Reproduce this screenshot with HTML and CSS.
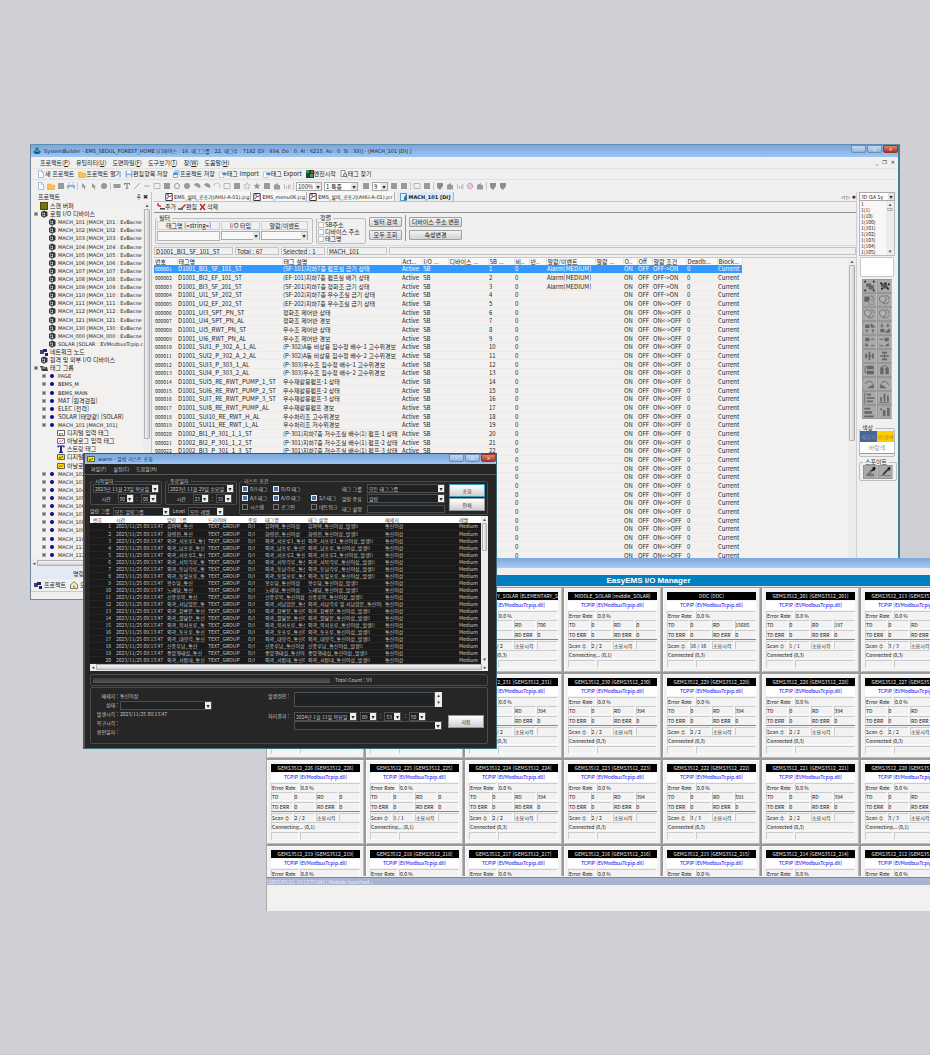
FILE: index.html
```html
<!DOCTYPE html>
<html lang="ko">
<head>
<meta charset="utf-8">
<title>SystemBuilder</title>
<link rel="stylesheet" href="styles.css">
</head>
<body>
<svg class="sprite" aria-hidden="true">
  <symbol id="logo" viewBox="0 0 8 8"><path d="M4 0l2 2-2 2-2-2zM2 3l2 2-2 2-2-2zM6 3l2 2-2 2-2-2z" fill="#0b7f86"/><path d="M2 5h4v2H2z" fill="#1a5c78"/></symbol>
  <symbol id="new" viewBox="0 0 8 8"><path d="M1.500.5h3l2 2v5h-5z" fill="#fff" stroke="#8fb0cc" stroke-width=".8"/><path d="M4.500.5v2h2" fill="none" stroke="#8fb0cc" stroke-width=".7"/></symbol>
  <symbol id="open" viewBox="0 0 8 8"><path d="M.5 2h3l1 1h3v4.500h-7z" fill="#f6c453" stroke="#d99a2b" stroke-width=".5"/><path d="M4 0h3v3H5z" fill="#fbe7b0"/></symbol>
  <symbol id="save" viewBox="0 0 8 8"><rect x=".5" y=".5" width="7" height="7" rx="1" fill="#7fb4e6"/><path d="M2 .5h4v3H2z" fill="#fff"/><path d="M2 5h4v3H2z" fill="#dcebf8"/></symbol>
  <symbol id="saveall" viewBox="0 0 8 8"><path d="M2.500 0h5v5h-5z" fill="#9cc6ee"/><path d="M1 2h5v6H1z" fill="#4d8fd0" stroke="#fff" stroke-width=".5"/><path d="M2 5h3v2H2z" fill="#fff"/></symbol>
  <symbol id="import" viewBox="0 0 8 8"><path d="M.5 2h4v5.500h-4z" fill="#fff" stroke="#8fb0cc" stroke-width=".6"/><path d="M3 3h2.500V1.500L8 4 5.500 6V4.500H3z" fill="#3c86c9"/></symbol>
  <symbol id="engine" viewBox="0 0 8 8"><path d="M0 0h8v8H0z" fill="#263c38"/><path d="M0 0h3v3H0zM4 4h3v3H4z" fill="#2f9c58"/><path d="M5 1h2v2H5z" fill="#d43d3d"/></symbol>
  <symbol id="find" viewBox="0 0 8 8"><path d="M1 .5h4v6H1z" fill="#fff" stroke="#667" stroke-width=".7"/><circle cx="5" cy="5" r="1.600" fill="#cfe4ee" stroke="#456" stroke-width=".7"/><path d="M6 6l1.500 1.500" stroke="#456"/></symbol>
  <symbol id="print" viewBox="0 0 8 8"><path d="M2 0h4v3H2z" fill="#fff" stroke="#89a" stroke-width=".5"/><path d="M0 3h8v3.500H0z" fill="#8fb3d2"/><path d="M2 5h4v3H2z" fill="#e8f0f6"/></symbol>
  <symbol id="cursor" viewBox="0 0 8 8"><path d="M2 1l4 3.500H4.500L5.500 7l-1 .5-1-2.500L2 6z" fill="#999"/></symbol>
  <symbol id="block" viewBox="0 0 8 8"><path d="M1 1h6v6H1z" fill="#999"/></symbol>
  <symbol id="bar" viewBox="0 0 8 8"><path d="M.5 2h7v4h-7z" fill="#999"/></symbol>
  <symbol id="text" viewBox="0 0 8 8"><path d="M1 1h6v2H6V2H4.600v4.500h.9V7h-3v-.5h.9V2H2v1H1z" fill="#888"/></symbol>
  <symbol id="line" viewBox="0 0 8 8"><path d="M1 7l6-6" stroke="#aaa"/></symbol>
  <symbol id="dash" viewBox="0 0 8 8"><path d="M1 4h6" stroke="#aaa"/></symbol>
  <symbol id="box" viewBox="0 0 8 8"><path d="M1 1.500h6v5H1z" fill="none" stroke="#aaa" stroke-width=".8"/></symbol>
  <symbol id="ring" viewBox="0 0 8 8"><circle cx="4" cy="4" r="2.600" fill="none" stroke="#999"/></symbol>
  <symbol id="disc" viewBox="0 0 8 8"><circle cx="4" cy="4" r="3" fill="#999"/></symbol>
  <symbol id="wedge" viewBox="0 0 8 8"><path d="M1 3a3 3 0 016 3L4 5z" fill="#999"/></symbol>
  <symbol id="arc" viewBox="0 0 8 8"><path d="M1 4a3 3 0 016 0v2" fill="none" stroke="#bbb" stroke-width=".8"/></symbol>
  <symbol id="star" viewBox="0 0 8 8"><path d="M4 .8l1 2 2.300.3-1.700 1.600.4 2.300-2-1-2 1 .4-2.300L.7 3.100 3 2.800z" fill="none" stroke="#aaa" stroke-width=".7"/></symbol>
  <symbol id="starf" viewBox="0 0 8 8"><path d="M4 .8l1 2 2.300.3-1.700 1.600.4 2.300-2-1-2 1 .4-2.300L.7 3.100 3 2.800z" fill="#999"/></symbol>
  <symbol id="house" viewBox="0 0 8 8"><path d="M1 3l4-2v2h2v4.500H1z" fill="#999"/></symbol>
  <symbol id="home" viewBox="0 0 8 8"><path d="M.5 4L4 .5 7.500 4v3.500h-7z" fill="#f3ecc8" stroke="#555" stroke-width=".8"/><path d="M3 4.500h2v3H3z" fill="#c9a227"/></symbol>
  <symbol id="chart" viewBox="0 0 8 8"><path d="M1.500 2v5M3.500 4v3M5.500 3v4M7 2v5" stroke="#bbb"/></symbol>
  <symbol id="down" viewBox="0 0 8 8"><path d="M1 1h6v3L4.500 7.500H3L1 5z" fill="#8c8c8c"/></symbol>
  <symbol id="cross" viewBox="0 0 8 8"><circle cx="4" cy="4" r="2.500" fill="none" stroke="#c5389b" stroke-dasharray="1.500 1"/><path d="M4 0v8M0 4h8" stroke="#e58acb" stroke-width=".5"/></symbol>
  <symbol id="dev" viewBox="0 0 8 8"><path d="M4 .5L7.500 2v4L4 7.700 1 6V2z" fill="#33383d"/><path d="M2 2.500l3 .5v3.500L2 5.500z" fill="#b7bdc2"/><circle cx="3.300" cy="4.300" r=".9" fill="#222"/></symbol>
  <symbol id="scan" viewBox="0 0 8 8"><path d="M0 0h8v8H0z" fill="#4c4a08"/><path d="M1 1h6v6H1z" fill="#77730c"/></symbol>
  <symbol id="net" viewBox="0 0 8 8"><path d="M0 2h4v4H0z" fill="#3b3f86"/><path d="M3 1h4v3H3zM5 5h3v3H5z" fill="#22265c"/></symbol>
  <symbol id="tags" viewBox="0 0 8 8"><path d="M0 2h3l1 1h3l1 4H2z" fill="#3c3c3c"/><path d="M1 3h5v2H1z" fill="#777"/></symbol>
  <symbol id="dot" viewBox="0 0 8 8"><circle cx="4" cy="4" r="2" fill="#0a0a8c"/></symbol>
  <symbol id="di" viewBox="0 0 8 8"><path d="M.5 1.500h7v5h-7z" fill="#fff" stroke="#444" stroke-width=".8"/><path d="M2 4h1.500v1.500H2z" fill="#d22"/><path d="M4.500 4H6v1.500H4.500z" fill="#292"/></symbol>
  <symbol id="ai" viewBox="0 0 8 8"><path d="M.5 1.500h7v5h-7z" fill="#fff" stroke="#555" stroke-width=".8"/><path d="M1.500 5.500l1.500-2 1.500 1 2-2" fill="none" stroke="#c2389a" stroke-width=".8"/></symbol>
  <symbol id="st" viewBox="0 0 8 8"><path d="M.5.5h7v2h-1l-.5-1H5v5l1 .5V8H2V7l1-.5v-5H2l-.5 1h-1z" fill="#20208c"/></symbol>
  <symbol id="do" viewBox="0 0 8 8"><path d="M.5 1.500h7v5h-7z" fill="#ffe100" stroke="#444" stroke-width=".8"/><path d="M2 4h2v1.500H2z" fill="#d22"/><path d="M4.500 3H6v1.500H4.500z" fill="#292"/></symbol>
  <symbol id="ao" viewBox="0 0 8 8"><path d="M.5 1.500h7v5h-7z" fill="#ffe100" stroke="#444" stroke-width=".8"/><path d="M1.500 5.500l1.500-2 1.500 1 2-2" fill="none" stroke="#a22" stroke-width=".8"/></symbol>
  <symbol id="jcg" viewBox="0 0 8 8"><path d="M.8.5h6.400v7H.8z" fill="#fff" stroke="#222" stroke-width=".9"/><path d="M2 6l2-3 1 1 1.500-2" stroke="#a2278f" fill="none"/><path d="M2 2h2" stroke="#333"/></symbol>
  <symbol id="page" viewBox="0 0 8 8"><path d="M.5.5h6v7h-6z" fill="#dff0fa" stroke="#3a84b5" stroke-width=".8"/><path d="M4 4l3-3v6H4z" fill="#2d79a8"/></symbol>
  <symbol id="add" viewBox="0 0 8 8"><path d="M0 1l4 3M1 0v3H4" stroke="#c22" fill="none"/><path d="M3 5h5v1.500H3z" fill="#445"/></symbol>
  <symbol id="edit" viewBox="0 0 8 8"><path d="M0 5h5v2H0z" fill="#678"/><path d="M3 5l4-4 1 1-4 4z" fill="#a33"/></symbol>
  <symbol id="del" viewBox="0 0 8 8"><path d="M1 1l5 6M6 1L1 7" stroke="#c01818" stroke-width="1.300"/></symbol>
  <symbol id="g0" viewBox="0 0 14 14"><path d="M3 4h6v4H3zM6 6h6v5H6z" fill="#666"/><path d="M1 1h2v2H1zM11 1h2v2h-2zM1 11h2v2H1zM11 11h2v2h-2z" fill="#222"/></symbol>
  <symbol id="g1" viewBox="0 0 14 14"><path d="M3 4h7v4H3zM5 7h6v3H5z" fill="#555"/><path d="M2 3h2v2H2zM7 3h2v2H7zM11 4h2v2h-2zM3 9h2v2H3zM10 9h2v2h-2z" fill="#111"/></symbol>
  <symbol id="g2" viewBox="0 0 14 14"><path d="M1 3h6v6H1z" fill="#606060"/><path d="M6 7h6v5H6z" fill="#aaa" stroke="#888"/><path d="M8 2q4 0 4 4" fill="none" stroke="#707070"/></symbol>
  <symbol id="g3" viewBox="0 0 14 14"><path d="M1 4l4-2 4 3-2 5-5-1z" fill="#b4b4b4" stroke="#707070"/><path d="M8 2q5 0 4 4M5 11q6 2 7-3" fill="none" stroke="#707070"/></symbol>
  <symbol id="g4" viewBox="0 0 14 14"><path d="M2 3h5v4H2z" fill="#666"/><path d="M9 2l4 4H9zM4 13V9M2.500 10.500L4 9l1.500 1.500M11 13V9M9.500 10.500L11 9l1.500 1.500" fill="#666" stroke="#666"/></symbol>
  <symbol id="g5" viewBox="0 0 14 14"><path d="M2 8h5v4H2z" fill="#666"/><path d="M13 8v4H8zM4 1v4M2.500 4L4 6l1.500-2M11 1v4M9.500 4L11 6l1.500-2" fill="#666" stroke="#666"/></symbol>
  <symbol id="g6" viewBox="0 0 14 14"><path d="M2 2h5v4H2zM2 8l5 4H2z" fill="#666"/><path d="M13 4H9l1.500-1.500M13 11H9l1.500 1.500" fill="none" stroke="#666"/></symbol>
  <symbol id="g7" viewBox="0 0 14 14"><path d="M7 2h5v4H7zM12 8v4H7z" fill="#666"/><path d="M1 4h4L3.500 2.500M1 11h4l-1.500 1.500" fill="none" stroke="#666"/></symbol>
  <symbol id="g8" viewBox="0 0 14 14"><path d="M2 4h2v6H2zM6 2h2v10H6zM10 4h2v6h-2zM2 6.500h10v1H2z" fill="#666"/></symbol>
  <symbol id="g9" viewBox="0 0 14 14"><path d="M4 2h6v2H4zM2 6h10v2H2zM4 10h6v2H4zM6.500 2h1v10h-1z" fill="#666"/></symbol>
  <symbol id="g10" viewBox="0 0 14 14"><path d="M4 2h8v4H4zM4 8h8v4H4z" fill="#666"/><path d="M4 3H2v7h3" fill="none" stroke="#666"/></symbol>
  <symbol id="g11" viewBox="0 0 14 14"><path d="M2 4h4v8H2zM8 4h4v8H8z" fill="#666"/><path d="M3 4q4-4 8 0" fill="none" stroke="#666"/></symbol>
  <symbol id="g12" viewBox="0 0 14 14"><path d="M4 12l8-5v5z" fill="#666"/><path d="M2 7q4-6 9-1" fill="none" stroke="#666"/></symbol>
  <symbol id="g13" viewBox="0 0 14 14"><path d="M2 12V7l8 5z" fill="#666"/><path d="M3 6q5-5 9 2" fill="none" stroke="#666"/></symbol>
  <symbol id="g14" viewBox="0 0 14 14"><path d="M1.500 1v12" stroke="#666"/><path d="M4 2h5v2H4zM4 6h9v2H4zM4 10h7v2H4z" fill="#666"/></symbol>
  <symbol id="g15" viewBox="0 0 14 14"><path d="M1 12.500h12" stroke="#666"/><path d="M2 6h2v5H2zM6 2h2v9H6zM10 4h2v7h-2z" fill="#666"/></symbol>
  <symbol id="g16" viewBox="0 0 14 14"><path d="M1 2h7v2H1zM1 6h9v3H1zM1 11h11v2H1z" fill="#666"/></symbol>
  <symbol id="g17" viewBox="0 0 14 14"><path d="M2 3h2v2H2zM5 5h3v7H5zM10 2h3v10h-3z" fill="#666"/></symbol>
  <symbol id="drop" viewBox="0 0 14 14"><path d="M2 9h9v3H2z" fill="#777"/><path d="M4 10l6-6" stroke="#222" stroke-width="2"/><path d="M9 2l3-1 1 2-2 3z" fill="#111"/><path d="M4 10l4-4" stroke="#eee"/></symbol>
  <symbol id="drop2" viewBox="0 0 14 14"><path d="M1 11h12" stroke="#777"/><path d="M4 10l6-6" stroke="#333" stroke-width="2"/><path d="M9 2l3-1 1 2-2 3z" fill="#222"/></symbol>
</svg>

<main class="desktop">
  <section class="builder" aria-label="SystemBuilder">
    <header class="titlebar">
      <svg class="ic"><use href="#logo"/></svg>
      <h1>SystemBuilder - EMS_SEOUL_FOREST_HOME [디바이스 : 16, 태그그룹 : 22, 태그수 : 7182 (DI : 934, Do : 0, AI : 6215, Ao : 0, SI : 33)] - [MACH_101 [DI] ]</h1>
      <div class="winbtns"><button aria-label="최소화">–</button><button aria-label="복원">▫</button><button class="close" aria-label="닫기">×</button></div>
    </header>
    <nav class="menu">
      <button>프로젝트(<u>P</u>)</button><button>유틸리티(<u>U</u>)</button><button>도면파일(<u>F</u>)</button><button>도구보기(<u>T</u>)</button><button>창(<u>W</u>)</button><button>도움말(<u>H</u>)</button>
      <div class="mdi"><button aria-label="최소화">_</button><button aria-label="복원">❐</button><button aria-label="닫기">✕</button></div>
    </nav>
    <div class="tools">
      <button><svg class="ic"><use href="#new"/></svg>새 프로젝트</button><button><svg class="ic"><use href="#open"/></svg>프로젝트 열기</button><button><svg class="ic"><use href="#save"/></svg>편집항목 저장</button><button><svg class="ic"><use href="#saveall"/></svg>프로젝트 저장</button><button><svg class="ic"><use href="#import"/></svg>태그 Import</button><button><svg class="ic"><use href="#import"/></svg>태그 Export</button><button><svg class="ic"><use href="#engine"/></svg>엔진시작</button><button><svg class="ic"><use href="#find"/></svg>태그 찾기</button>
    </div>
    <div class="tools draw" id="draw"></div>

    <div class="work">
      <aside class="project">
        <div class="panehead"><h2>프로젝트</h2><span>♀ ✖</span></div>
        <div class="treewrap">
          <ul class="tree" id="tree"></ul>
          <div class="vbar treebar"><i>▴</i><b></b></div>
        </div>
        <div class="hbar"><i>◂</i><b></b><i>▸</i></div>
        <div class="cmd">명령</div>
        <div class="ptabs"><button><svg class="ic"><use href="#net"/></svg>프로젝트</button><button><svg class="ic"><use href="#home"/></svg>도면</button></div>
      </aside>

      <section class="editor">
        <div class="tabs">
          <button><svg class="ic"><use href="#jcg"/></svg>EMS_설비_공조기(AHU-A-01).jcg</button><button><svg class="ic"><use href="#jcg"/></svg>EMS_menu06.jcg</button><button><svg class="ic"><use href="#jcg"/></svg>EMS_설비_공조기(AHU-A-01).jcr</button><button class="on"><svg class="ic"><use href="#page"/></svg>MACH_101 [DI]</button>
          <span class="tabnav">◁ ▷ ✖</span>
        </div>
        <div class="tools sub"><button><svg class="ic"><use href="#add"/></svg>추가</button><button><svg class="ic"><use href="#edit"/></svg>편집</button><button><svg class="ic"><use href="#del"/></svg>삭제</button></div>
        <form class="filter">
          <fieldset class="fgrid"><legend>필터</legend>
            <label for="f1">태그명 [=string=]</label><label for="f2">I/O 타입</label><label for="f3">알람/이벤트</label>
            <input id="f1" type="text"><span class="sel"><select id="f2"><option></option></select></span><span class="sel"><select id="f3"><option></option></select></span>
          </fieldset>
          <fieldset class="sort"><legend>정렬</legend>
            <label><input type="checkbox">SB주소</label><label><input type="checkbox">디바이스 주소</label><label><input type="checkbox">태그명</label>
          </fieldset>
          <div class="btns"><button type="button">필터 검색</button><button type="button">모두 조회</button></div>
          <div class="btns wide"><button type="button">디바이스 주소 변환</button><button type="button">속성변경</button></div>
        </form>
        <div class="info"><span>D1001_BI1_SF_101_ST</span><span>Total : 67</span><span>Selected : 1</span><span>MACH_101</span><span></span></div>
        <div class="gridwrap">
          <div class="gridbox">
          <table class="grid">
            <colgroup><col class="c23"><col class="c105"><col class="c119"><col class="c21"><col class="c26"><col class="c40"><col class="c26"><col class="c15"><col class="c17"><col class="c49"><col class="c28"><col class="c14"><col class="c15"><col class="c34"><col class="c31"><col class="c25"></colgroup>
            <thead><tr><th>번호</th><th>태그명</th><th>태그 설명</th><th>Act...</th><th>I/O ...</th><th>디바이스 ...</th><th>SB ...</th><th>비..</th><th>반..</th><th>알람/이벤트</th><th>알람 ...</th><th>O..</th><th>Off</th><th>알람 조건</th><th>Deadb...</th><th>Block...</th></tr></thead>
            <tbody id="tags-body"></tbody>
          </table>
          </div>
          <div class="vbar gridbar"><i>▴</i><b></b></div>
        </div>
      </section>

      <aside class="dock">
        <span class="sel"><select aria-label="라이브러리"><option>3D ISA Sy</option></select></span>
        <div class="lib"><ul id="lib"></ul><div class="vbar"><i>▴</i><b></b><i class="end">▾</i></div></div>
        <div class="preview"></div>
        <div class="shapes" id="shapes"></div>
        <fieldset class="colors"><legend>색상</legend><button class="fill">채우기</button><button class="stroke">선/글색</button><button class="back">바탕색</button></fieldset>
        <fieldset class="pick"><legend>스포이트</legend><button aria-label="채우기 추출"><svg><use href="#drop"/></svg></button><button aria-label="선 추출"><svg><use href="#drop2"/></svg></button></fieldset>
      </aside>
    </div>
    <footer class="status"></footer>
  </section>

  <section class="manager" aria-label="EasyEMS I/O Manager">
    <div class="mtitle"></div>
    <div class="mmenu"></div>
    <h2>EasyEMS I/O Manager</h2>
    <div class="cards" id="cards"></div>
    <div class="logline">[2023/03/21 19:13:37.841] Module launched...</div>
    <div class="log"></div>
  </section>

  <section class="alarm" aria-label="Alarm">
    <header class="titlebar">
      <svg class="ic"><use href="#do"/></svg>
      <h2>alarm - 알람 리스트 조회</h2>
      <div class="winbtns"><button aria-label="최소화">–</button><button aria-label="최대화">▫</button><button class="close" aria-label="닫기">×</button></div>
    </header>
    <nav class="menu"><button>파일(F)</button><button>설정(C)</button><button>도움말(H)</button></nav>
    <div class="abody">
      <form class="cond">
        <div class="dates">
          <fieldset><legend>시작일자</legend>
            <span class="sel full"><select aria-label="시작일자"><option>2023년 11월 23일 목요일</option></select></span>
            <div class="time"><span>시간</span><span class="sel"><select aria-label="시"><option>00</option></select></span>:<span class="sel"><select aria-label="분"><option>00</option></select></span></div>
          </fieldset>
          <fieldset><legend>종료일자</legend>
            <span class="sel full"><select aria-label="종료일자"><option>2023년 11월 29일 수요일</option></select></span>
            <div class="time"><span>시간</span><span class="sel"><select aria-label="시"><option>23</option></select></span>:<span class="sel"><select aria-label="분"><option>59</option></select></span></div>
          </fieldset>
          <div class="group"><label for="ag">알람 그룹</label><span class="sel g1"><select id="ag"><option>모든 알람그룹</option></select></span><label for="lv">Level</label><span class="sel g2"><select id="lv"><option>모든 레벨</option></select></span></div>
        </div>
        <fieldset class="list"><legend>리스트 조건</legend>
          <div class="checks">
            <label><input type="checkbox" checked>D/I 태그</label><label><input type="checkbox" checked>D/O 태그</label><i></i>
            <label><input type="checkbox" checked>A/I 태그</label><label><input type="checkbox" checked>A/O 태그</label><label><input type="checkbox" checked>S/I 태그</label>
            <label><input type="checkbox">시스템</label><label><input type="checkbox">로그인</label><label><input type="checkbox">네트워크</label>
          </div>
          <div class="opts">
            <label for="o1">태그 그룹</label><span class="sel"><select id="o1"><option>모든 태그그룹</option></select></span>
            <label for="o2">알람 종류</label><span class="sel"><select id="o2"><option>알람</option></select></span>
            <label for="o3">태그 설명</label><input id="o3" type="text">
          </div>
          <div class="go"><button type="button" class="main">조회</button><button type="button">인쇄</button></div>
        </fieldset>
      </form>
      <div class="alist">
        <div class="arow">
          <div class="abox">
          <table>
            <colgroup><col class="a23"><col class="a51"><col class="a41"><col class="a42"><col class="a15"><col class="a43"><col class="a77"><col class="a74"><col class="a25"></colgroup>
            <thead><tr><th>번호</th><th>시간</th><th>알람 그룹</th><th>드라이버</th><th>종류</th><th>태그명</th><th>태그 설명</th><th>메세지</th><th>레벨</th></tr></thead>
            <tbody id="alarm-body"></tbody>
          </table>
          </div>
          <div class="vbar"><i>▴</i><b></b><i class="end">▾</i></div>
        </div>
        <div class="hbar"><i>◂</i><b></b><i>▸</i></div>
      </div>
      <div class="count"><div class="prog"></div><span>Total Count : 93</span></div>
      <div class="detail">
        <dl><dt>메세지 :</dt><dd>통신이상</dd><dt><label for="d1">상태 :</label></dt><dd><span class="sel full"><select id="d1"><option></option></select></span></dd><dt>발생시각 :</dt><dd>2023/11/25 09:13:47</dd><dt>복구시각 :</dt><dd></dd><dt>확인일자 :</dt><dd></dd></dl>
        <div class="act">
          <label for="d2">발생원인 :</label><div class="memo"><textarea id="d2"></textarea><span class="spin">▴<br>▾</span></div>
          <label for="d3">처리결과 :</label><div><div class="when"><span class="sel day"><select id="d3"><option>2024년 1월 11일 목요일</option></select></span><span class="sel"><select aria-label="시"><option>09</option></select></span>:<span class="sel"><select aria-label="분"><option>53</option></select></span>:<span class="sel"><select aria-label="초"><option>50</option></select></span></div><span class="sel full"><select aria-label="결과"><option></option></select></span></div>
        </div>
        <button type="button" class="store">저장</button>
      </div>
    </div>
  </section>
</main>
<script src="app.js"></script>
</body>
</html>
```
FILE: styles.css
```css
* { box-sizing: border-box; }
body { margin: 0; background: #cfd0d5; color: #222; font: 6px/8px "Noto Sans CJK KR", sans-serif; }
h1, h2, ul, dl, dd, fieldset { margin: 0; padding: 0; }
h1, h2 { font: inherit; }
ul { list-style: none; }
button, input, select, textarea { font: inherit; color: inherit; margin: 0; padding: 0; border: 0; background: none; border-radius: 0; }
button { white-space: nowrap; }
legend { padding: 0 2px; line-height: 6px; }
table { border-collapse: collapse; table-layout: fixed; }
th, td { padding: 0; font-weight: 400; text-align: left; white-space: nowrap; overflow: hidden; }
.sprite { display: none; }
.ic { width: 8px; height: 8px; flex: none; }
.desktop { position: relative; min-height: 100vh; overflow: hidden; }

/* shared parts */
.titlebar { display: flex; align-items: center; gap: 3px; height: 12px; padding-left: 2px; background: linear-gradient(#7ba7dc, #9ec5f2); color: #17263c; font: 5px/8px "DejaVu Sans", "Noto Sans CJK KR", sans-serif; white-space: nowrap; }
.titlebar .winbtns { margin-left: auto; display: flex; gap: 1px; align-self: flex-start; }
.winbtns button { width: 15px; height: 8px; line-height: 6px; border: 1px solid #6d8db5; border-radius: 0 0 2px 2px; background: linear-gradient(#c5d9f0, #93b3d9); color: #fff; }
.winbtns .close { background: linear-gradient(#dd8570, #b8301c); border-color: #8a3a34; }
.menu { display: flex; align-items: center; gap: 6px; }
.sel { position: relative; display: block; min-width: 0; }
.sel select { display: block; width: 100%; height: 9px; padding: 0 8px 0 1px; appearance: none; border: 1px solid #a9a9a9; background: #fff; overflow: hidden; line-height: 7px; }
.sel::after { content: "▾"; position: absolute; right: 1px; top: 1px; bottom: 1px; width: 6px; font: 6px/7px "DejaVu Sans", sans-serif; text-align: center; background: #e4e4e4; color: #222; pointer-events: none; }
input[type=checkbox] { appearance: none; width: 6px; height: 6px; border: 1px solid #bcbcbc; background: #fff; flex: none; }
.vbar { display: flex; flex-direction: column; width: 8px; flex: none; background: #ececec; text-align: center; }
.vbar i, .hbar i { font: 5px/7px "DejaVu Sans", sans-serif; color: #444; }
.vbar b { margin: 0 1px; border: 1px solid #b0b0b4; border-radius: 1px; background: linear-gradient(90deg, #f4f4f4, #cfcfd2); }
.hbar { display: flex; align-items: center; height: 8px; background: #ececec; }
.hbar i { width: 6px; text-align: center; }
.hbar b { flex: 1; height: 6px; border: 1px solid #b0b0b4; background: linear-gradient(#f6f6f6, #cfcfd2); }
.end { margin-top: auto; }

/* tag editor window */
.builder { position: absolute; left: 30px; top: 144px; width: 870px; height: 456px; display: flex; flex-direction: column; background: #f0f0f0; border: 1px solid #5c8fb0; border-right: 2px solid #3f7f98; border-left-color: #6f8298; }
.builder .menu { height: 11px; padding-left: 9px; flex: none; }
.mdi { margin-left: auto; display: flex; gap: 4px; padding-right: 3px; font: 5px/7px "DejaVu Sans", sans-serif; }
.mdi button { font-weight: 700; }
.tools { display: flex; align-items: center; height: 11px; gap: 4px; padding-left: 6px; flex: none; border-top: 1px solid #e4e1d8; }
.tools button { display: flex; align-items: center; }
.draw { height: 13px; gap: 2px; }
.draw .zoom { width: 26px; }
.draw .type { width: 34px; margin-right: 2px; }
.draw .nr { width: 16px; }
.draw .sep { width: 1px; height: 8px; background: #c9c9c9; }
.work { flex: 1; display: flex; min-height: 0; }
.project { width: 121px; display: flex; flex-direction: column; border-right: 1px solid #c4c4c8; }
.panehead { display: flex; justify-content: space-between; height: 10px; padding: 1px 3px 0 7px; }
.treewrap { flex: 1; display: flex; min-height: 0; background: #f2f1f0; }
.tree { flex: 1; min-width: 0; display: flex; flex-direction: column; overflow: hidden; }
.tree li { flex: 1 1 0; min-height: 0; display: flex; align-items: center; gap: 2px; padding-left: 3px; white-space: nowrap; overflow: hidden; }
.tree .l1 { padding-left: 11px; }
.tree .l2 { padding-left: 20px; }
.tree .lat { font: 5px/8px "DejaVu Sans", sans-serif; }
.tree em { width: 4px; height: 4px; flex: none; border: 1px solid transparent; }
.tree .x em { border-color: #aaa; background: #666; }
.treebar b { height: 230px; }
.cmd { height: 12px; padding: 3px 0 0 42px; background: #e3eaf6; }
.ptabs { display: flex; height: 12px; gap: 4px; padding-left: 3px; align-items: center; }
.ptabs button { display: flex; align-items: center; gap: 2px; }
.editor { flex: 1; min-width: 0; display: flex; flex-direction: column; padding-left: 2px; }
.tabs { display: flex; align-items: center; height: 10px; padding-left: 11px; gap: 2px; border-bottom: 1px solid #c4c4c4; font: 5px/8px "DejaVu Sans", "Noto Sans CJK KR", sans-serif; }
.tabs button { display: flex; align-items: center; gap: 1px; height: 9px; border-right: 1px solid #b5b5b5; padding-right: 1px; background: #f7f7f7; }
.tabs .on { font-weight: 700; background: #dfeaf5; padding: 0 3px; }
.tabnav { margin-left: auto; }
.sub { border: 0; border-bottom: 1px solid #8f8f8f; padding-left: 3px; gap: 2px; }
.filter { display: flex; height: 32px; gap: 3px; padding: 2px 0 1px 1px; }
.filter fieldset { border: 1px solid #bdbdbd; border-radius: 2px; height: 29px; }
.filter .fgrid { width: 158px; display: grid; grid-template-columns: 63px 39px 47px; grid-template-rows: 9px 10px; gap: 1px; padding: 0 1px; }
.fgrid label { border: 1px solid #cfcfcf; text-align: center; line-height: 7px; white-space: nowrap; }
.fgrid input { border: 1px solid #b2b2b2; background: #f7f7f7; }
.fgrid .sel select { background: #f7f7f7; }
.sort { width: 50px; padding: 0 1px; }
.sort label { display: flex; align-items: center; gap: 1px; height: 7px; white-space: nowrap; }
.btns { display: flex; flex-direction: column; gap: 3px; width: 37px; padding: 2px 3px 0 0; border-right: 1px solid #999; height: 26px; }
.btns.wide { width: 53px; padding-right: 0; border: 0; }
.btns button { height: 10px; line-height: 8px; border: 1px solid #a0a0a0; border-radius: 1px; background: linear-gradient(#f4f4f4, #d2d2d2); }
.info { display: flex; gap: 2px; height: 12px; padding: 1px 0 2px; border-top: 1px solid #dcdcdc; }
.info span { width: 44px; border: 1px solid #c3c3c3; line-height: 7px; padding-left: 1px; }
.info span:first-child { width: 79px; }
.info span:nth-child(4) { width: 60px; }
.info span:last-child { flex: 1; }
.gridwrap { flex: 1; display: flex; min-height: 0; border-top: 1px solid #c8c8c8; }
.gridbox { flex: 1; min-width: 0; background: #f2f1f0; }
.grid { width: 588px; height: 302px; }
.grid thead { background: #fafafa; }
.grid th { border-right: 1px solid #e3e3e3; }
.grid th, .grid td { line-height: 7px; padding-left: 1px; }
.grid td:first-child { font-size: 5px; }
.grid tbody tr { border-bottom: 1px solid #ebeae8; }
.grid .cur { background: #3399ff; color: #fff; }
.c23 { width: 23px; } .c105 { width: 105px; } .c119 { width: 119px; } .c21 { width: 21px; } .c26 { width: 26px; } .c40 { width: 40px; } .c15 { width: 15px; } .c17 { width: 17px; } .c49 { width: 49px; } .c28 { width: 28px; } .c14 { width: 14px; } .c34 { width: 34px; } .c31 { width: 31px; } .c25 { width: 25px; }
.gridbar b { height: 176px; }
.dock { width: 42px; padding: 0 3px 0 2px; border-left: 1px solid #d0d0d4; }
.dock .sel { font-size: 5px; }
.lib { display: flex; height: 55px; border: 1px solid #bcbcc0; border-top: 0; background: #f7f7f7; }
.lib ul { flex: 1; font-size: 5px; line-height: 6px; padding-left: 1px; }
.lib .vbar b { height: 3px; }
.preview { height: 20px; margin: 1px 1px 2px 1px; border: 1px solid #c6c6ca; border-radius: 1px; background: #fff; }
.shapes { display: grid; grid-template-columns: 15px 15px; grid-auto-rows: 14px; width: 30px; margin: 0 0 0 3px; }
.shapes button, .pick button { background: #aaa; border: 1px solid #969696; border-right-color: #bbb; }
.shapes svg, .pick svg { display: block; width: 13px; height: 12px; }
.dock fieldset { border: 1px solid #bdbdc0; border-radius: 2px; }
.colors { display: grid; grid-template-columns: 1fr 1fr; margin-top: 6px; padding-bottom: 2px; color: #999; }
.colors legend, .pick legend { color: #333; }
.colors .fill { height: 11px; background: #4a6699; color: #8791a5; font-size: 5px; }
.colors .stroke { background: #fc0; color: #a18a2a; font-size: 5px; }
.colors .back { grid-column: span 2; height: 12px; background: #fff; border-bottom: 1px solid #999; }
.pick { display: flex; padding: 0 3px 1px 3px; margin-top: 2px; }
.pick button { width: 15px; height: 14px; }
.status { height: 8px; border-top: 1px solid #c9c9c9; }

/* I/O manager window */
.manager { position: absolute; left: 266px; top: 558px; width: 764px; height: 353px; display: flex; flex-direction: column; background: #f0f0f0; border-left: 1px solid #aaa; overflow: hidden; }
.mtitle { height: 10px; flex: none; background: linear-gradient(#7ba7dc, #a9cbf4); }
.mmenu { height: 7px; flex: none; }
.manager h2 { flex: none; height: 12px; border-bottom: 1px solid #e8e8e8; background: #0080c0; color: #fff; font: 700 8px/11px "Liberation Sans", sans-serif; text-align: center; }
.cards { flex: 1; min-height: 0; display: grid; grid-template-columns: repeat(7, 97px); grid-auto-rows: 84px; gap: 2px; padding-top: 1px; background: #999; overflow: hidden; }
.card { display: grid; grid-template-rows: repeat(5, 1fr) 1px repeat(3, 1fr); gap: 1px; padding: 3px; background: #f2f2f2; border: 1px solid #fafafa; border-right-color: #bbb; border-bottom-color: #bbb; font-size: 5px; color: #111; }
.card > * { min-width: 0; min-height: 0; line-height: 8px; white-space: nowrap; overflow: hidden; }
.card h3 { margin: 0; font: inherit; line-height: 8px; background: #000; color: #eee; text-align: center; }
.card .dll { background: #fff; color: #00e; text-align: center; }
.card hr { width: 100%; margin: 0; border: 0; background: #888; }
.card .four { display: grid; grid-template-columns: repeat(4, 1fr); gap: 1px; }
.card .two { display: grid; grid-template-columns: 28px 1fr; gap: 1px; }
.card span { border: 1px solid #fbfbfb; border-top-color: #ccc; border-left-color: #ccc; line-height: 7px; }
.logline { height: 8px; flex: none; margin-top: 1px; background: #a9b4d0; color: #eef; border-top: 1px solid #7d88a8; font-size: 5px; line-height: 7px; }
.log { height: 26px; flex: none; background: #f2f1f0; }

/* alarm list window */
.alarm { position: absolute; left: 83px; top: 453px; width: 414px; height: 296px; display: flex; flex-direction: column; background: #262626; color: #c6c6c6; border: 1px solid #3b6f80; border-left: 2px solid #5b5552; border-top-color: #48545f; }
.alarm .titlebar { height: 10px; }
.alarm .menu { height: 11px; padding-left: 6px; gap: 7px; border-bottom: 1px solid #555; flex: none; font-size: 5px; }
.abody { flex: 1; padding: 3px 8px 4px 5px; min-height: 0; display: flex; flex-direction: column; }
.alarm fieldset, .count, .detail { border: 1px solid #4b4b4b; border-radius: 2px; }
.alarm fieldset { padding: 0 2px; }
.alarm .sel select, .alarm input[type=text], .alarm textarea { background: #1f2225; border: 1px solid #4e4e4e; }
.alarm .sel::after { background: #eee; }
.cond { display: flex; gap: 2px; height: 38px; font-size: 5px; }
.dates { display: grid; grid-template-columns: 72px 72px; grid-template-rows: 27px 10px; gap: 1px 3px; width: 147px; }
.time { display: flex; justify-content: flex-end; align-items: center; gap: 3px; padding: 1px 2px 0 0; }
.time > span:first-child { margin-right: 4px; }
.time .sel { width: 16px; }
.group { grid-column: span 2; display: flex; align-items: center; gap: 3px; white-space: nowrap; }
.group .g1 { width: 57px; } .group .g2 { width: 36px; }
.list { flex: 1; height: 37px; display: grid; grid-template-columns: 96px 1fr 36px; gap: 4px; }
.checks { display: grid; grid-template-columns: 31px 38px 1fr; grid-template-rows: 9px 9px 10px; align-items: center; }
.checks label { display: flex; gap: 2px; align-items: center; white-space: nowrap; }
.alarm input[type=checkbox] { border-color: #777; background: #262626; }
.alarm input[type=checkbox]:checked { background: #4272b8; border: 1px solid #eee; }
.opts { display: grid; grid-template-columns: 22px 1fr; grid-template-rows: 9px 9px 9px; gap: 1px 3px; align-items: center; white-space: nowrap; }
.opts input { height: 8px; width: 100%; }
.go { display: flex; flex-direction: column; gap: 1px; }
.go button, .store { height: 13px; background: linear-gradient(#fff, #cfcfcf); border: 1px solid #999; color: #333; }
.go .main { border-color: #39a0c0; }
.arow { display: flex; height: 147px; }
.abox { flex: 1; min-width: 0; background: #1a1a1a; }
.arow table { width: 391px; }
.arow thead { background: #fff; color: #333; }
.arow th { height: 7px; line-height: 6px; font-size: 5px; }
.arow td { height: 7px; line-height: 6px; font-size: 5px; border-bottom: 1px solid #252525; color: #c8c8c8; }
.arow td:first-child { text-align: right; padding-right: 2px; }
.arow td, .arow th { padding-left: 3px; }
.arow td:nth-child(5), .arow th:nth-child(5) { padding-left: 1px; }
.a23 { width: 23px; } .a51 { width: 51px; } .a41 { width: 41px; } .a42 { width: 42px; } .a15 { width: 15px; } .a43 { width: 43px; } .a77 { width: 77px; } .a74 { width: 74px; } .a25 { width: 25px; }
.arow .vbar { width: 7px; }
.arow .vbar b { height: 28px; }
.alist .hbar { background: #eee; }
.count { display: flex; align-items: center; gap: 5px; height: 12px; flex: none; margin-top: 3px; padding-left: 2px; font-size: 5px; }
.prog { width: 237px; height: 5px; background: linear-gradient(#3c3c3c, #555); }
.detail { flex: 1; margin-top: 1px; display: flex; gap: 3px; padding: 4px 3px 0; font-size: 5px; }
.detail dl { width: 118px; display: grid; grid-template-columns: 24px 1fr; grid-auto-rows: 9px; gap: 0 2px; }
.detail dt { text-align: right; }
.act { width: 174px; margin-left: 53px; display: grid; grid-template-columns: 22px 148px; grid-template-rows: 15px 20px; gap: 5px 4px; align-content: start; }
.act label { white-space: nowrap; }
.memo { display: flex; }
.memo textarea { flex: 1; min-width: 0; height: 15px; resize: none; }
.spin { width: 7px; background: #eee; color: #333; font: 5px/7px "DejaVu Sans", sans-serif; text-align: center; }
.when { display: flex; gap: 3px; }
.when .sel { width: 17px; }
.when .day { width: 63px; }
.store { width: 36px; margin: 23px 0 0 auto; }
```
FILE: app.js
```js
const ic = id => `<svg class="ic"><use href="#${id}"/></svg>`;
const put = (id, html) => { document.getElementById(id).innerHTML = html; };

/* drawing toolbar */
const tool = id => id === '|' ? '<i class="sep"></i>' : `<button aria-label="${id}">${ic(id)}</button>`;
const tools = s => s.split(' ').map(tool).join('');
const sel = (cls, label, v) => `<span class="sel ${cls}"><select aria-label="${label}"><option>${v}</option></select></span>`;
put('draw', tools('new open block print | cursor cursor disc | bar text line dash box block ring disc wedge wedge arc box block star starf block house chart |')
  + sel('zoom', '배율', '100%') + sel('type', '글꼴', '1 특종') + tool('block') + sel('nr', '크기', '9')
  + tools('block block | box block | down house chart cross house | down down'));

/* project tree: level, icon, label, expandable */
const tree = [[0, 'scan', '스캔 버퍼'], [0, 'dev', '로컬 I/O 디바이스', 1]];
['101', '102', '103', '104', '105', '106', '107', '108', '109', '110', '111', '112', '121', '130', '000'].forEach(n => tree.push([1, 'dev', `MACH_${n} [MACH_${n} : EvBacne`]));
tree.push([1, 'dev', 'SOLAR [SOLAR : EVModbusTcpip.c'], [0, 'net', '네트워크 노드'], [0, 'dev', '원격 및 외부 I/O 디바이스'], [0, 'tags', '태그 그룹', 1]);
['PAGE', 'BEMS_M', 'BEMS_MAIN', 'MAT [원격검침]', 'ELEC [전력]', 'SOLAR [태양광] [SOLAR]', 'MACH_101 [MACH_101]'].forEach(t => tree.push([1, 'dot', t, 1]));
[['di', '디지털 입력 태그'], ['ai', '아날로그 입력 태그'], ['st', '스트링 태그'], ['do', '디지털 출력 태그'], ['ao', '아날로그 출력 태그']].forEach(t => tree.push([2, ...t]));
for (let n = 102; n < 113; n++) tree.push([1, 'dot', `MACH_${n} [MACH_${n}]`, 1]);
put('tree', tree.map(([l, i, t, x]) => `<li class="l${l}${x ? ' x' : ''}${/[가-힣]/.test(t) ? '' : ' lat'}"><em></em>${ic(i)}${t}</li>`).join(''));

/* tag rows */
const tags = `D1001_BI1_SF_101_ST|(SF-101)지하7층 펌프실 급기 상태
D1001_BI2_EF_101_ST|(EF-101)지하7층 펌프실 배기 상태
D1001_BI3_SF_201_ST|(SF-201)지하7층 정화조 급기 상태
D1001_UI1_SF_202_ST|(SF-202)지하7층 우수조실 급기 상태
D1001_UI2_EF_202_ST|(EF-202)지하7층 우수조실 급기 상태
D1001_UI3_SPT_PN_ST|정화조 제어반 상태
D1001_UI4_SPT_PN_AL|정화조 제어반 경보
D1001_UI5_RWT_PN_ST|우수조 제어반 상태
D1001_UI6_RWT_PN_AL|우수조 제어반 경보
D1001_SUI1_P_302_A_1_AL|(P-302)A동 비상용 집수정 배수-1 고수위경보
D1001_SUI2_P_302_A_2_AL|(P-302)A동 비상용 집수정 배수-2 고수위경보
D1001_SUI3_P_303_1_AL|(P-303)우수조 집수정 배수-1 고수위경보
D1001_SUI4_P_303_2_AL|(P-303)우수조 집수정 배수-2 고수위경보
D1001_SUI5_RE_RWT_PUMP_1_ST|우수재활용펌프-1 상태
D1001_SUI6_RE_RWT_PUMP_2_ST|우수재활용펌프-2 상태
D1001_SUI7_RE_RWT_PUMP_3_ST|우수재활용펌프-3 상태
D1001_SUI8_RE_RWT_PUMP_AL|우수재활용펌프 경보
D1001_SUI10_RE_RWT_H_AL|우수처리조 고수위경보
D1001_SUI11_RE_RWT_L_AL|우수처리조 저수위경보
D1002_BI1_P_301_1_1_ST|(P-301)지하7층 저수조실 배수(1) 펌프-1 상태
D1002_BI2_P_301_1_2_ST|(P-301)지하7층 저수조실 배수(1) 펌프-2 상태
D1002_BI3_P_301_1_3_ST|(P-301)지하7층 저수조실 배수(1) 펌프-3 상태`.split('\n').map(s => s.split('|'));
let rows = '';
for (let i = 1; i <= 34; i++) {
  const [name, desc] = tags[i - 1] || ['', ''];
  const near = name ? [String(i).padStart(6, '0'), name, desc, 'Active', 'SB', '', i] : ['', '', '', '', '', '', ''];
  const cells = [...near, '0', '', i < 4 ? 'Alarm[MEDIUM]' : '', '', 'ON', 'OFF', i < 5 ? 'OFF-&gt;ON' : 'ON&lt;-&gt;OFF', '0', 'Current'];
  rows += `<tr${i === 1 ? ' class="cur"' : ''}>${cells.map(c => `<td>${c}</td>`).join('')}</tr>`;
}
put('tags-body', rows);

put('lib', ['1', '1(1)', '1(10)', '1(100)', '1(101)', '1(102)', '1(103)', '1(104)', '1(105)'].map(t => `<li>${t}</li>`).join(''));
put('shapes', [0, 1, 2, 3, 3, 3, 4, 5, 6, 7, 8, 9, 10, 11, 12, 13, 14, 15, 16, 17].map(n => `<button aria-label="도형 ${n}"><svg><use href="#g${n}"/></svg></button>`).join(''));

/* device cards: name, RD, scan, connected */
const g = (n, rd, scan, ok = 1) => [`GEMS3512_${n} [GEMS3512_${n}]`, rd, scan, ok];
const cards = [
  ['PRIMARY_SOLAR', 0, '2/2', 1], ['HIGH_SOLAR', 0, '2/2', 1], ['ELEMENTARY_SOLAR [ELEMENTARY_SOLAR]', 706, '2/2', 1], ['MIDDLE_SOLAR [middle_SOLAR]', 0, '2/2', 0], ['DDC [DDC]', 15685, '16/16', 1], g(201, 197, '1/1'), g(213, 591, '3/3'),
  g(233, 394, '2/2'), g(232, 394, '2/2'), g(231, 394, '2/2'), g(230, 394, '2/2'), g(229, 394, '2/2'), g(228, 394, '2/2'), g(227, 394, '2/2'),
  g(226, 0, '2/2', 0), g(225, 0, '1/1', 0), g(224, 394, '2/2'), g(223, 394, '2/2'), g(222, 591, '3/3'), g(221, 394, '2/2'), g(220, 0, '3/3', 0),
  g(219), g(218), g(217), g(216), g(215), g(214), g(212)];
const cellsOf = a => a.map(t => `<span>${t}</span>`).join('');
put('cards', cards.map(([n, rd, s, ok]) => `<article class="card"><h3>${n}</h3><div class="dll">TCPIP [EVModbusTcpip.dll]</div><div class="two">${cellsOf(['Error Rate', '0.0 %'])}</div>` + (s ? `<div class="four">${cellsOf(['TD', 0, 'RD', rd])}</div><div class="four">${cellsOf(['TD ERR', 0, 'RD ERR', 0])}</div><hr><div class="four">${cellsOf(['Scan 수', s.replace('/', ' / '), '소요시각', ''])}</div><span>${ok ? 'Connected (0,3)' : 'Connecting... (0,1)'}</span><div class="two">${cellsOf(['', ''])}</div>` : '') + '</article>').join(''));

/* alarm rows */
const places = ['유여택', '화령전', '외곽_서포루1', '외곽_남포루', '외곽_서포루2', '외곽_서북각루', '외곽_동남각루', '외곽_동일포루', '봉수당', '노래당', '신풍루북', '외곽_서남암문', '외곽_창룡문', '외곽_팔달문', '외곽_북서포루', '외곽_동포루', '외곽_대양각', '신풍루남', '중앙행태실', '외곽_서장대'];
put('alarm-body', places.map((p, i) => {
  const desc = i === 11 ? '외곽_서남각루 및 서남암문_통신이상' : `${p}_통신이상_발생!!`;
  return `<tr><td>${i + 1}</td><td>2023/11/25 09:13:47</td><td>${p}_통신</td><td>TEXT_GROUP</td><td>D/I</td><td>${p}_통신이상</td><td>${desc}</td><td>통신이상</td><td>Medium</td></tr>`;
}).join(''));
```
